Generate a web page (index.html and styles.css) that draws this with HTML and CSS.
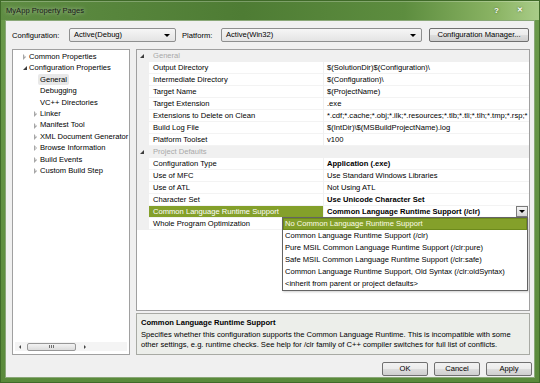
FILE: index.html
```html
<!DOCTYPE html>
<html lang="en">
<head>
    <meta charset="UTF-8">
    <meta name="viewport" content="width=device-width, initial-scale=1.0">
    <title>MyApp Property Pages</title>
    <link rel="stylesheet" href="styles.css">
</head>
<body>
    <div class="window">
        <!-- Title bar -->
        <div class="titlebar">
            <span class="title">MyApp Property Pages</span>
            <span class="caption-btns">
                <span class="cap-btn">?</span>
                <span class="cap-btn close">✕</span>
            </span>
        </div>

        <div class="client">
            <!-- Configuration / platform row -->
            <div class="toolbar">
                <span class="label">Configuration:</span>
                <div class="combo combo-config">Active(Debug)<span class="combo-arrow"></span></div>
                <span class="label label-platform">Platform:</span>
                <div class="combo combo-platform">Active(Win32)<span class="combo-arrow"></span></div>
                <div class="btn btn-manager">Configuration Manager...</div>
            </div>

            <div class="main">
                <!-- Tree of property pages -->
                <div class="tree">
                    <div class="tree-row"><span class="tw closed"></span>Common Properties</div>
                    <div class="tree-row"><span class="tw open"></span>Configuration Properties</div>
                    <div class="tree-row child"><span class="tw none"></span><span class="sel">General</span></div>
                    <div class="tree-row child"><span class="tw none"></span>Debugging</div>
                    <div class="tree-row child"><span class="tw none"></span>VC++ Directories</div>
                    <div class="tree-row child"><span class="tw closed"></span>Linker</div>
                    <div class="tree-row child"><span class="tw closed"></span>Manifest Tool</div>
                    <div class="tree-row child"><span class="tw closed"></span>XML Document Generator</div>
                    <div class="tree-row child"><span class="tw closed"></span>Browse Information</div>
                    <div class="tree-row child"><span class="tw closed"></span>Build Events</div>
                    <div class="tree-row child"><span class="tw closed"></span>Custom Build Step</div>

                    <div class="hscroll">
                        <span class="sb-arrow left"></span>
                        <span class="sb-thumb"><span class="grip"></span></span>
                        <span class="sb-arrow right"></span>
                    </div>
                </div>

                <div class="right">
                    <!-- Property grid -->
                    <div class="grid">
                        <div class="row cat"><span class="margin"><span class="tw open"></span></span><span class="name">General</span></div>
                        <div class="row"><span class="margin"></span><span class="name">Output Directory</span><span class="value">$(SolutionDir)$(Configuration)\</span></div>
                        <div class="row"><span class="margin"></span><span class="name">Intermediate Directory</span><span class="value">$(Configuration)\</span></div>
                        <div class="row"><span class="margin"></span><span class="name">Target Name</span><span class="value">$(ProjectName)</span></div>
                        <div class="row"><span class="margin"></span><span class="name">Target Extension</span><span class="value">.exe</span></div>
                        <div class="row"><span class="margin"></span><span class="name">Extensions to Delete on Clean</span><span class="value">*.cdf;*.cache;*.obj;*.ilk;*.resources;*.tlb;*.tli;*.tlh;*.tmp;*.rsp;*</span></div>
                        <div class="row"><span class="margin"></span><span class="name">Build Log File</span><span class="value">$(IntDir)\$(MSBuildProjectName).log</span></div>
                        <div class="row"><span class="margin"></span><span class="name">Platform Toolset</span><span class="value">v100</span></div>
                        <div class="row cat"><span class="margin"><span class="tw open"></span></span><span class="name">Project Defaults</span></div>
                        <div class="row"><span class="margin"></span><span class="name">Configuration Type</span><span class="value bold">Application (.exe)</span></div>
                        <div class="row"><span class="margin"></span><span class="name">Use of MFC</span><span class="value">Use Standard Windows Libraries</span></div>
                        <div class="row"><span class="margin"></span><span class="name">Use of ATL</span><span class="value">Not Using ATL</span></div>
                        <div class="row"><span class="margin"></span><span class="name">Character Set</span><span class="value bold">Use Unicode Character Set</span></div>
                        <div class="row active"><span class="margin"></span><span class="name">Common Language Runtime Support</span><span class="value bold">Common Language Runtime Support (/clr)</span><span class="drop-btn"><span class="combo-arrow"></span></span></div>
                        <div class="row"><span class="margin"></span><span class="name">Whole Program Optimization</span><span class="value"></span></div>

                        <!-- Open dropdown list -->
                        <div class="dropdown">
                            <div class="opt hl">No Common Language Runtime Support</div>
                            <div class="opt">Common Language Runtime Support (/clr)</div>
                            <div class="opt">Pure MSIL Common Language Runtime Support (/clr:pure)</div>
                            <div class="opt">Safe MSIL Common Language Runtime Support (/clr:safe)</div>
                            <div class="opt">Common Language Runtime Support, Old Syntax (/clr:oldSyntax)</div>
                            <div class="opt">&lt;inherit from parent or project defaults&gt;</div>
                        </div>
                    </div>

                    <!-- Description -->
                    <div class="desc">
                        <div class="desc-title">Common Language Runtime Support</div>
                        <div class="desc-text">Specifies whether this configuration supports the Common Language Runtime. This is incompatible with some<br>other settings, e.g. runtime checks. See help for /clr family of C++ compiler switches for full list of conflicts.</div>
                    </div>
                </div>
            </div>

            <div class="buttons">
                <div class="btn">OK</div>
                <div class="btn">Cancel</div>
                <div class="btn">Apply</div>
            </div>
        </div>
    </div>
</body>
</html>
```
FILE: styles.css
```css
body {
    margin: 0;
    padding: 0;
    font-family: 'Liberation Sans', Arial, sans-serif;
    font-size: 7.6px;
    color: #000;
}

/* Window frame */
.window {
    width: 540px;
    height: 383px;
    box-sizing: border-box;
    background: linear-gradient(to bottom, #6b9a4b, #5a8a3b);
    border: 1px solid #3f6a28;
    display: flex;
    flex-direction: column;
}

.titlebar {
    height: 19px;
    display: flex;
    align-items: center;
    justify-content: space-between;
    padding: 0 6px 0 5px;
    background: linear-gradient(to right, #5f8d43 0%, #4e7c34 45%, #5d8d3f 75%, #8bb464 92%, #a9cc88 100%);
    box-shadow: inset 0 1px 0 rgba(255, 255, 255, 0.25);
}

.title {
    color: #1a1a1a;
    font-size: 7.6px;
    text-shadow: 0 0 4px rgba(255, 255, 255, 0.7);
}

.caption-btns {
    display: flex;
    gap: 18px;
    padding-right: 10px;
}

.cap-btn {
    color: #fff;
    font-size: 8px;
    font-weight: bold;
    text-shadow: 0 0 2px #3a5a20;
}

.cap-btn.close {
    font-size: 7px;
}

.client {
    flex: 1;
    margin: 0 4px 4px 4px;
    background: #f0f0f0;
    border: 1px solid #8aa878;
    padding: 7px 4px 0 6px;
    display: flex;
    flex-direction: column;
}

/* Top row */
.toolbar {
    height: 14px;
    display: flex;
    align-items: center;
}

.label {
    width: 57px;
}

.label.label-platform {
    width: 39px;
    margin-left: 6px;
}

.combo {
    position: relative;
    height: 14px;
    box-sizing: border-box;
    border: 1px solid #8e8f8f;
    border-radius: 2px;
    background: linear-gradient(to bottom, #f6f6f6, #e4e4e4);
    padding: 0 4px;
    line-height: 12px;
}

.combo-config {
    width: 107px;
}

.combo-platform {
    width: 201px;
}

.combo-arrow {
    position: absolute;
    right: 5px;
    top: 5px;
    width: 0;
    height: 0;
    border-left: 3px solid transparent;
    border-right: 3px solid transparent;
    border-top: 3px solid #000;
}

.btn {
    height: 14px;
    box-sizing: border-box;
    border: 1px solid #707070;
    border-radius: 2px;
    background: linear-gradient(to bottom, #f2f2f2 0%, #ebebeb 50%, #dddddd 51%, #cfcfcf 100%);
    text-align: center;
    line-height: 12px;
}

.btn-manager {
    width: 100px;
    margin-left: 7px;
}

/* Main area */
.main {
    margin-top: 7px;
    height: 306px;
    display: flex;
    gap: 6px;
}

.tree {
    position: relative;
    width: 118px;
    box-sizing: border-box;
    background: #fff;
    border: 1px solid #a0a0a0;
    padding-top: 1px;
}

.tree-row {
    height: 11.4px;
    line-height: 11.4px;
    display: flex;
    align-items: center;
    padding-left: 9px;
    white-space: nowrap;
}

.tree-row.child {
    padding-left: 20px;
}

.tw {
    display: inline-block;
    width: 7px;
    height: 7px;
    position: relative;
}

.tw.closed::before {
    content: '';
    position: absolute;
    left: 1px;
    top: 1px;
    border-top: 3px solid transparent;
    border-bottom: 3px solid transparent;
    border-left: 3px solid #a6a6a6;
}

.tw.closed::after {
    content: '';
    position: absolute;
    left: 1.8px;
    top: 2.3px;
    border-top: 1.7px solid transparent;
    border-bottom: 1.7px solid transparent;
    border-left: 1.7px solid #fff;
}

.tw.open::before {
    content: '';
    position: absolute;
    left: 1px;
    top: 1px;
    border-left: 4px solid transparent;
    border-bottom: 4px solid #3c3c3c;
}

.sel {
    background: #e8e8e8;
    border-radius: 2px;
    padding: 0 2px;
    margin-left: -2px;
}

.hscroll {
    position: absolute;
    left: 2px;
    right: 2px;
    bottom: 3px;
    height: 9px;
    display: flex;
    align-items: center;
    background: #f4f4f4;
}

.sb-arrow {
    width: 10px;
    height: 9px;
    position: relative;
}

.sb-arrow.left::before {
    content: '';
    position: absolute;
    left: 4px;
    top: 3px;
    border-top: 2px solid transparent;
    border-bottom: 2px solid transparent;
    border-right: 2px solid #444;
}

.sb-arrow.right::before {
    content: '';
    position: absolute;
    left: 4px;
    top: 3px;
    border-top: 2px solid transparent;
    border-bottom: 2px solid transparent;
    border-left: 2px solid #444;
}

.sb-thumb {
    flex: 1;
    height: 8px;
    margin: 0 4px 0 2px;
    box-sizing: border-box;
    border: 1px solid #979797;
    border-radius: 2px;
    background: linear-gradient(to bottom, #f3f3f3, #dcdcdc);
    display: flex;
    align-items: center;
    justify-content: center;
}

.grip {
    width: 5px;
    height: 3px;
    background: repeating-linear-gradient(to right, #6f6f6f 0 1px, transparent 1px 2px);
}

.right {
    flex: 1;
    display: flex;
    flex-direction: column;
    gap: 2px;
}

/* Property grid */
.grid {
    position: relative;
    height: 262px;
    box-sizing: border-box;
    background: #fff;
    border: 1px solid #a0a0a0;
    overflow: hidden;
}

.row {
    height: 12px;
    line-height: 12px;
    display: flex;
    white-space: nowrap;
}

.margin {
    width: 12px;
    flex: none;
    background: #f0f0f0;
    display: flex;
    align-items: center;
    padding-left: 2px;
    box-sizing: border-box;
}

.name {
    width: 175px;
    flex: none;
    padding-left: 4px;
    box-sizing: border-box;
    border-right: 1px solid #f0f0f0;
    border-bottom: 1px solid #f3f3f3;
    overflow: hidden;
}

.value {
    flex: 1;
    min-width: 0;
    padding-left: 3px;
    overflow: hidden;
    border-bottom: 1px solid #f3f3f3;
}

.bold {
    font-weight: bold;
}

.row.cat .name {
    flex: 1;
    background: #f0f0f0;
    color: #a8a8a8;
    border: none;
}

.row.active .name {
    background: #84a02a;
    color: #fff;
}

.drop-btn {
    position: relative;
    flex: none;
    width: 12px;
    height: 11px;
    margin-right: 1px;
    box-sizing: border-box;
    border: 1px solid #7a7a7a;
    background: linear-gradient(to bottom, #f6f6f6, #d6d6d6);
}

.drop-btn .combo-arrow {
    right: 2px;
    top: 3px;
}

/* Dropdown list over the grid */
.dropdown {
    position: absolute;
    left: 145px;
    top: 167px;
    width: 246px;
    box-sizing: border-box;
    background: #fff;
    border: 1px solid #646464;
    box-shadow: 1px 1px 2px rgba(0, 0, 0, 0.2);
}

.opt {
    height: 12px;
    line-height: 12px;
    padding-left: 2px;
    white-space: nowrap;
}

.opt.hl {
    background: #84a02a;
    color: #fdfde8;
    outline: 1px solid #6d8a1c;
    outline-offset: -1px;
}

/* Description */
.desc {
    flex: 1;
    box-sizing: border-box;
    border: 1px solid #a8aaa4;
    background: #eceeea;
    padding: 4px 4px 0 4px;
    line-height: 10px;
}

.desc-title {
    font-weight: bold;
    margin-bottom: 2px;
}

.desc-text {
    white-space: nowrap;
}

/* Dialog buttons */
.buttons {
    margin-top: 7px;
    margin-right: -2px;
    display: flex;
    justify-content: flex-end;
    gap: 6px;
}

.buttons .btn {
    width: 46px;
}
```
